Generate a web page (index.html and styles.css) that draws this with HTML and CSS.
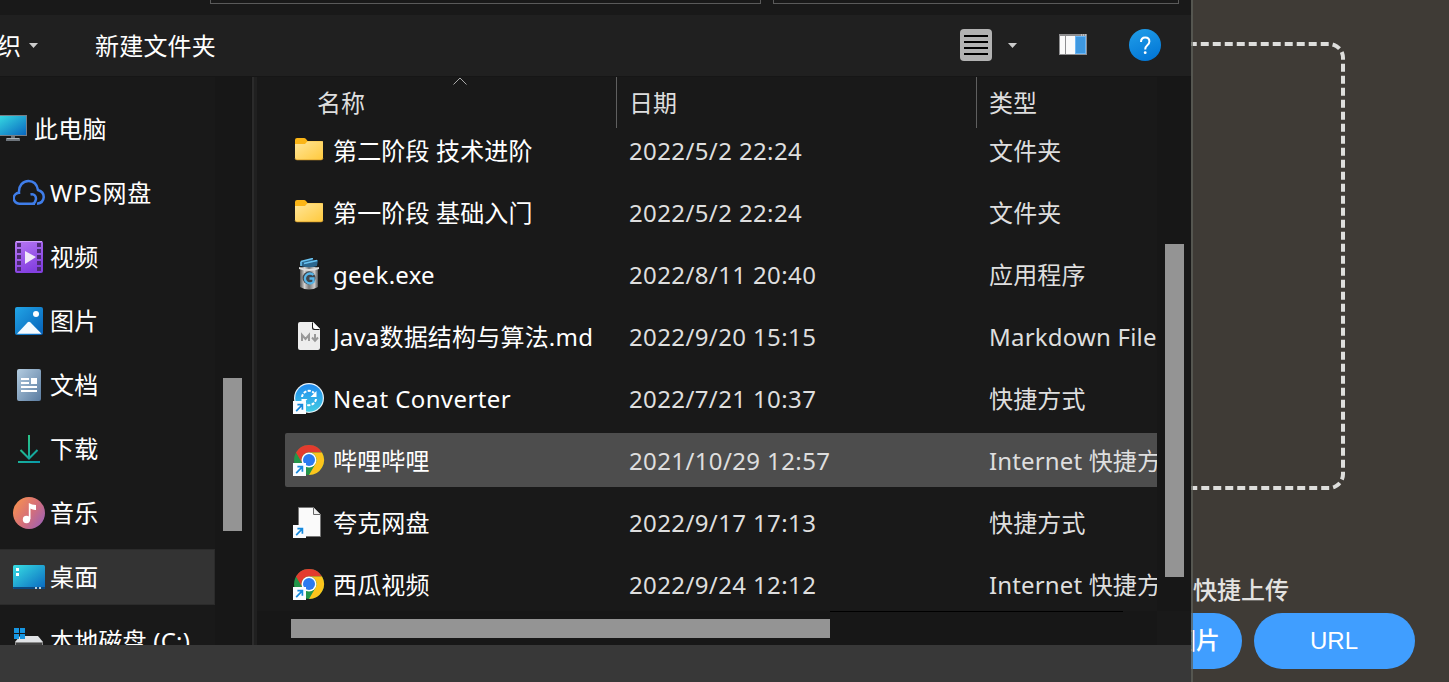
FILE: index.html
```html
<!DOCTYPE html>
<html lang="zh-CN">
<head>
<meta charset="utf-8">
<title>上传</title>
<link rel="stylesheet" href="styles.css">
</head>
<body>
<svg class="defs" width="0" height="0">
  <defs>
    <linearGradient id="screen" x1="0" y1="0" x2="1" y2="1"><stop offset="0" stop-color="#38dfe3"/><stop offset="1" stop-color="#0967c0"/></linearGradient>
    <linearGradient id="film" x1="0" y1="0" x2=".4" y2="1"><stop offset="0" stop-color="#b879f4"/><stop offset="1" stop-color="#8440e0"/></linearGradient>
    <linearGradient id="photo" x1="0" y1="0" x2="1" y2="1"><stop offset="0" stop-color="#22a5e6"/><stop offset="1" stop-color="#0560b8"/></linearGradient>
    <linearGradient id="ask" x1=".2" y1="0" x2=".6" y2="1"><stop offset="0" stop-color="#1f9ce8"/><stop offset="1" stop-color="#0377d6"/></linearGradient>
    <linearGradient id="paper" x1="0" y1="0" x2="1" y2="1"><stop offset="0" stop-color="#b3cce0"/><stop offset="1" stop-color="#5b7ca0"/></linearGradient>
    <linearGradient id="down" gradientUnits="userSpaceOnUse" x1="4" y1="3" x2="27" y2="30"><stop offset="0" stop-color="#35cf7e"/><stop offset="1" stop-color="#0799ac"/></linearGradient>
    <linearGradient id="song" x1="0" y1=".2" x2="1" y2=".9"><stop offset="0" stop-color="#f79150"/><stop offset=".5" stop-color="#d56f79"/><stop offset="1" stop-color="#9860ba"/></linearGradient>
    <linearGradient id="gold" x1="0" y1="0" x2="1" y2="1"><stop offset="0" stop-color="#ffe69a"/><stop offset="1" stop-color="#ffc93c"/></linearGradient>
    <linearGradient id="neat" x1="0" y1="0" x2="0" y2="1"><stop offset="0" stop-color="#218bf0"/><stop offset="1" stop-color="#41cbe2"/></linearGradient>
    <linearGradient id="metal" x1="0" y1="0" x2="1" y2="0"><stop offset="0" stop-color="#555"/><stop offset=".25" stop-color="#d2d2d2"/><stop offset=".5" stop-color="#777"/><stop offset=".8" stop-color="#ccc"/><stop offset="1" stop-color="#555"/></linearGradient>
    <symbol id="link" viewBox="0 0 13 13"><path d="M0 0h13v13H0z" fill="#fafcff"/><path d="M3.200 10.200L9 4.200M4.400 3.600h5v5.200" fill="none" stroke="#1689dc" stroke-width="1.700"/></symbol>
    <symbol id="folder" viewBox="0 0 32 32"><path d="M2 6q0-2 2-2h7q1.200 0 2 1l1.600 2H28q2 0 2 2v4H2z" fill="#fbb516"/><path d="M2 10h10l2.500-2.800H30V24q0 2-2 2H4q-2 0-2-2z" fill="url(#gold)"/><path d="M2 24.500q.5 1.300 2 1.300h24q1.500 0 2-1.300" fill="none" stroke="#dda22c" stroke-width=".8"/></symbol>
    <symbol id="chrome" viewBox="0 0 32 32">
      <circle cx="16" cy="15" r="15" fill="#23964a"/>
      <path d="M3 7.500A15 15 0 0 1 29 7.500H16A7.500 7.500 0 0 0 9.500 18.700z" fill="#e33b2e"/>
      <path d="M29 7.500A15 15 0 0 1 16 30l6.500-11.200A7.500 7.500 0 0 0 16 7.500z" fill="#fcc41c"/>
      <circle cx="16" cy="15" r="7.500" fill="#fff"/><circle cx="16" cy="15" r="6" fill="#2a7af0"/>
      <use href="#link" x="0" y="18" width="13" height="13"/>
    </symbol>
  </defs>
</svg>

<main class="page">
  <div class="dropzone"></div>
  <div class="quick-title">快捷上传</div>
  <div class="quick-actions"><button class="btn btn-image">图片</button><button class="btn btn-url">URL</button></div>
</main>

<section class="dialog">
  <div class="address"><span class="field field-path"></span><span class="field field-search"></span></div>
  <div class="toolbar">
    <span class="organize">组织</span>
    <svg class="caret" width="9" height="5"><path d="M0 0h9L4.500 5z" fill="#ccc"/></svg>
    <span class="new-folder">新建文件夹</span>
    <svg class="view" width="32" height="32"><rect width="32" height="32" rx="4" fill="#b2b2b2"/><path d="M4 7h24M4 13h24M4 19h24M4 25h24" stroke="#000" stroke-width="2"/></svg>
    <svg class="caret caret-view" width="9" height="5"><path d="M0 0h9L4.500 5z" fill="#ccc"/></svg>
    <svg class="preview" width="28" height="21"><path d="M0 0h28v21H0z" fill="#8e8e90"/><path d="M1 2h5v18H1zM7 2h9v18H7z" fill="#fafafa"/><path d="M16 2h11v18H16z" fill="#6bb6f5"/><path d="M17 3h9v16h-9z" fill="#3e98e0"/><path d="M22 1h1M24 1h1M26 1h1" stroke="#eee"/></svg>
    <svg class="help" width="32" height="32"><circle cx="16" cy="16" r="16" fill="url(#ask)"/><path d="M12 13q0-4.500 4.200-4.500t4.200 4q0 2-2.100 3.700t-2.100 4.300" fill="none" stroke="#fff" stroke-width="2"/><circle cx="16.200" cy="23.700" r="1.400" fill="#fff"/></svg>
  </div>
  <div class="body">
    <nav class="tree">
      <div class="node root"><svg width="32" height="32"><path d="M1 2h31v21H1z" fill="#777f88"/><path d="M1 3h30v19H1z" fill="url(#screen)"/><path d="M16 23h4v2h5v3H11v-3h5z" fill="#6d747b"/><path d="M12 25.500h12" stroke="#aab2b9"/></svg>此电脑</div>
      <div class="node"><svg width="32" height="32"><path d="M22 26.700H6.500a5.500 5.500 0 0 1-.5-11C5.500 8.500 10 4 15.500 4S24 7.500 25 13c8 2.500 7.500 12.700-1 13.700M17.500 17.500c4-1 6 2 5.300 5.300Q22 26.700 19 26.700" fill="none" stroke="#3f7de9" stroke-width="2.500"/></svg><i class="l-wps">WPS网盘</i></div>
      <div class="node"><svg width="32" height="32"><rect x="2" width="28" height="32" rx="2" fill="url(#film)"/><path d="M6 2v29M26 2v29" stroke="#4c2a72" stroke-width="4" stroke-dasharray="4 2"/><path d="M3 .5h26" stroke="#cea0fb"/><path d="M12 10l11 6-11 7z" fill="#f0e8f8"/></svg>视频</div>
      <div class="node"><svg width="32" height="32"><rect x="2" y="2" width="28" height="28" rx="2" fill="url(#photo)"/><circle cx="23" cy="9" r="3" fill="#fff"/><path d="M4 28.800L14.500 17.600q1.500-1.500 3 0L28.500 28.800z" fill="#f4faff"/></svg>图片</div>
      <div class="node"><svg width="32" height="32"><rect x="4" width="24" height="32" rx="2" fill="url(#paper)"/><path d="M8 10h8M8 14h8M8 18h16M8 22h16" stroke="#fff" stroke-width="2"/><path d="M18 9h6v6h-6z" fill="#fff"/></svg>文档</div>
      <div class="node"><svg width="32" height="32"><path d="M16 2v24M7.500 17l8.500 8.500 8.500-8.500M5 29h22" fill="none" stroke="url(#down)" stroke-width="2"/></svg>下载</div>
      <div class="node"><svg width="32" height="32"><circle cx="16" cy="16" r="16" fill="url(#song)"/><circle cx="13.500" cy="22.500" r="3.700" fill="#fff"/><path d="M15.800 22V6q3 2 7.200 2v5q-3 .3-5.500-1.400V22z" fill="#fff"/></svg>音乐</div>
      <div class="node selected"><svg width="32" height="32"><rect y="4" width="32" height="24" rx="1.500" fill="url(#screen)"/><path d="M0 26h32v1q0 1-1 1H1q-1 0-1-1z" fill="#0b477f"/><path d="M3 7h3v3H3zM3 12h3v3H3z" fill="#fff"/><path d="M22 26h2v2h-2zM26 26h2v2h-2z" fill="#b7cedb"/></svg>桌面</div>
      <div class="node"><svg width="32" height="32"><path d="M7 11h18l5 6v3H2v-3z" fill="#e0e2e5"/><path d="M2 17h28v15H2z" fill="#8c8c8c"/><path d="M3 18h26v13H3z" fill="#434343"/><path d="M6 20h3v3H6z" fill="#2fe53b"/><path d="M1 3h5v5H1zM7 3h5v5H7zM1 9h5v5H1zM7 9h5v5H7z" fill="#1696e2"/></svg><i class="l-disk">本地磁盘 (C:)</i></div>
    </nav>
    <div class="tree-scroll"><div class="tree-thumb"></div></div>
    <div class="splitter"></div>
    <div class="files">
      <div class="list">
        <div class="head"><span class="col-name">名称</span><span class="col-date">日期</span><span class="col-type">类型</span>
          <svg class="sort" width="14" height="8"><path d="M.5 7.500l6.500-6.500 6.500 6.500" fill="none" stroke="#aaa"/></svg>
        </div>
        <div class="row"><span class="name"><svg width="32" height="32"><use href="#folder"/></svg><i>第二阶段 技术进阶</i></span><span class="date">2022/5/2 22:24</span><span class="type">文件夹</span></div>
        <div class="row"><span class="name"><svg width="32" height="32"><use href="#folder"/></svg><i>第一阶段 基础入门</i></span><span class="date">2022/5/2 22:24</span><span class="type">文件夹</span></div>
        <div class="row"><span class="name"><svg width="32" height="32"><path d="M7 9h18v20q-9 5-18 0z" fill="url(#metal)"/><path d="M6 9q10 4 20 0v2q-10 4-20 0z" fill="#ddd"/><path d="M7.500 4l12-3.500v2l5.500-.5-1 6q-8 2.500-16 0z" fill="#2b668e"/><path d="M8 3.500l12-3M11 5.500l13-3M8 3.500V8" fill="none" stroke="#69c4f3" stroke-width="1.600"/><circle cx="16" cy="20" r="6.500" fill="#41464c"/><path d="M20.500 17A5 5 0 1 0 20.500 24V20.500H16.500" fill="none" stroke="#58b5e8" stroke-width="2.300"/></svg><i class="l-geek">geek.exe</i></span><span class="date">2022/8/11 20:40</span><span class="type">应用程序</span></div>
        <div class="row"><span class="name"><svg width="32" height="32"><path d="M7 2h13l7 7v19q0 2-2 2H7q-2 0-2-2V4q0-2 2-2z" fill="#ededed"/><path d="M19 2l8 8h-6q-2 0-2-2z" fill="#1b1b1b"/><path d="M20 2l7 7h-5q-2 0-2-2z" fill="#fff"/><path d="M9 21v-6l3.500 4 3.500-4v6M22 14v6M19 17.500l3 3.200 3-3.200" fill="none" stroke="#999" stroke-width="2"/></svg><i class="l-java">Java数据结构与算法.md</i></span><span class="date">2022/9/20 15:15</span><span class="type l-md">Markdown File</span></div>
        <div class="row"><span class="name"><svg class="shortcut" width="32" height="32"><circle cx="16" cy="15" r="15" fill="#e9f5fc"/><circle cx="16" cy="15" r="13.800" fill="url(#neat)"/><path d="M9 14a7 7 0 0 1 12-4M23 16a7 7 0 0 1-12 4" fill="none" stroke="#fff" stroke-width="2" stroke-dasharray="3 1.400"/><path d="M23.500 8v6h-6zM8.500 22v-6h6z" fill="#fff"/><use href="#link" x="0" y="18" width="13" height="13"/></svg><i class="l-neat">Neat Converter</i></span><span class="date">2022/7/21 10:37</span><span class="type">快捷方式</span></div>
        <div class="row hover"><span class="name"><svg class="shortcut" width="32" height="32"><use href="#chrome"/></svg><i>哔哩哔哩</i></span><span class="date">2021/10/29 12:57</span><span class="type">Internet 快捷方式</span></div>
        <div class="row"><span class="name"><svg class="shortcut" width="32" height="32"><path d="M5.500.5h15l7 7v22h-22z" fill="#fafafa" stroke="#777"/><path d="M20.500.5v7h7" fill="#eee" stroke="#666"/><use href="#link" x="0" y="18" width="13" height="13"/></svg><i>夸克网盘</i></span><span class="date">2022/9/17 17:13</span><span class="type">快捷方式</span></div>
        <div class="row"><span class="name"><svg class="shortcut" width="32" height="32"><use href="#chrome"/></svg><i>西瓜视频</i></span><span class="date">2022/9/24 12:12</span><span class="type">Internet 快捷方式</span></div>
      </div>
      <div class="vscroll"><div class="vthumb"></div></div>
      <div class="hscroll"><div class="hthumb"></div><div class="hline"></div></div>
      <div class="corner"></div>
    </div>
  </div>
  <footer class="footer"></footer>
</section>
</body>
</html>
```
FILE: styles.css
```css
* { box-sizing: border-box; }
body {
  margin: 0;
  width: 1449px;
  height: 682px;
  overflow: hidden;
  position: relative;
  background: #3f3b36;
  color: #fff;
  font: 24px/32px "Noto Sans", "Noto Sans CJK SC", sans-serif;
}
svg { display: block; flex: none; }
i { font-style: normal; }
.defs { position: absolute; }

/* Upload page behind the dialog */
.page {
  height: 682px;
  padding: 42px 34px 0 0;
  display: flex;
  flex-direction: column;
  align-items: flex-end;
}
.dropzone {
  width: 700px;
  height: 448px;
  margin-right: 70px;
  border: 4px dashed #dededc;
  border-radius: 16px;
}
.quick-title {
  margin: 85px 126px 0 0;
  color: #e3e2e0;
  font-family: "Liberation Sans", "Noto Sans CJK SC", sans-serif;
  font-weight: 500;
}
.quick-actions { display: flex; gap: 12px; margin-top: 6px; }
.btn {
  height: 56px;
  padding: 0;
  border: 0;
  border-radius: 28px;
  background: #409eff;
  color: #fff;
  font: 500 24px/56px "Liberation Sans", "Noto Sans CJK SC", sans-serif;
}
.btn-image { width: 94px; padding-left: 2px; }
.btn-url { width: 161px; padding-right: 1px; }

/* File dialog */
.dialog {
  position: absolute;
  left: 0;
  top: 0;
  width: 1193px;
  height: 682px;
  border-right: 2px solid rgba(94, 96, 90, .75);
  display: flex;
  flex-direction: column;
  overflow: hidden;
}
.address { height: 15px; background: #191919; display: flex; gap: 12px; padding-left: 210px; }
.field { height: 4px; border: 1px solid #5a5a5a; border-top: 0; }
.field-path { width: 551px; }
.field-search { width: 406px; }
.toolbar {
  height: 62px;
  background: #202020;
  border-bottom: 1px solid #161616;
  display: flex;
  align-items: center;
}
.organize { margin-left: -27px; }
.caret { margin-left: 8px; }
.new-folder { margin-left: 57px; letter-spacing: .2px; }
.view { margin-left: 744px; margin-top: -2px; }
.caret-view { margin-left: 16px; }
.preview { margin-left: 42px; margin-top: -2px; }
.help { margin-left: 42px; margin-top: -2px; }
.body { height: 568px; display: flex; background: #191919; }
.tree { width: 215px; padding-top: 20px; overflow: hidden; }
.node {
  height: 56px;
  margin: 4px 0 8px;
  padding-left: 13px;
  display: flex;
  align-items: center;
  gap: 5px;
  white-space: nowrap;
  letter-spacing: .2px;
}
.node.root { padding-left: 0; margin-left: -5px; gap: 7px; }
.node.selected { background: #333; border: 1px solid #2b2b2b; border-left: 0; }
.l-wps { letter-spacing: .8px; }
.l-disk { letter-spacing: .2px; }
.tree-scroll { width: 36px; background: #171717; padding: 301px 9px 0 8px; }
.tree-thumb { height: 153px; background: #949494; }
.splitter { width: 6px; background: #202020; border-left: 1px solid #151515; box-shadow: inset 2px 0 #2b2b2b; }
.files { display: grid; grid-template: 534px 34px / 900px 34px; }
.list { overflow: hidden; }
.head { height: 42px; display: flex; position: relative; color: #dedede; padding-left: 60px; }
.head span { height: 51px; line-height: 52px; flex: none; }
.col-name { width: 300px; border-right: 1px solid #5f5f5f; }
.col-date { width: 360px; padding-left: 12px; border-right: 1px solid #5f5f5f; }
.col-type { padding-left: 12px; }
.sort { position: absolute; left: 196px; top: 0; }
.row { height: 54px; margin: 4px 0 8px 28px; padding-left: 8px; display: flex; align-items: center; white-space: nowrap; }
.row.hover { background: #4d4d4d; border-radius: 2px 0 0 2px; }
.row i, .date, .type { letter-spacing: .15px; padding-top: 2px; }
.name { width: 336px; display: flex; align-items: center; gap: 8px; flex: none; }
.date, .type { color: #dedede; flex: none; }
.row .date { width: 360px; letter-spacing: .38px; }
.shortcut { margin-top: 2px; }
.row .l-geek { letter-spacing: .25px; }
.row .l-java { letter-spacing: .2px; }
.row .l-neat { letter-spacing: .4px; }
.row .l-md { letter-spacing: .2px; }
.vscroll { background: #171717; padding: 167px 7px 0 8px; }
.vthumb { height: 333px; background: #949494; }
.hscroll { background: #171717; padding-left: 34px; display: flex; }
.hthumb { width: 539px; height: 19px; margin-top: 8px; background: #949494; }
.hline { width: 293px; height: 1px; background: #000; }
.corner { background: #191919; }
.footer { flex: 1; background: #383838; }
```
